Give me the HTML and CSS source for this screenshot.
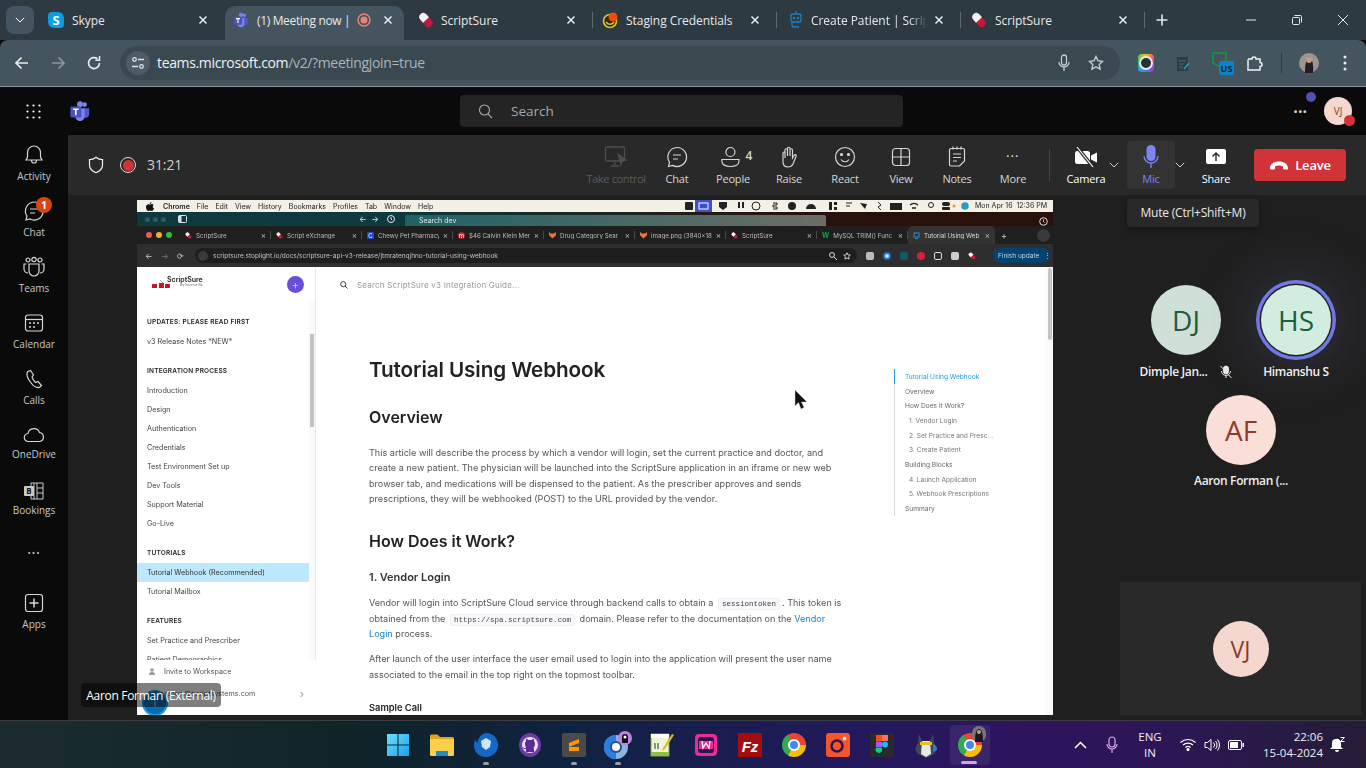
FILE: index.html
```html
<!DOCTYPE html>
<html lang="en">
<head>
<meta charset="utf-8">
<title>Meeting now | Microsoft Teams</title>
<link rel="stylesheet" href="styles.css">
</head>
<body>
<svg class="defs" aria-hidden="true">
  <symbol id="pill" viewBox="0 0 16 16"><g transform="rotate(-42 8 8)"><rect x="4" y="0" width="8" height="16" rx="4" fill="#c2183a"/><path d="M4 8V4a4 4 0 0 1 8 0v4z" fill="#f4f4f4"/></g></symbol>
  <symbol id="x" viewBox="0 0 10 10"><path d="M1.5 1.5l7 7M8.5 1.5l-7 7" stroke="currentColor" stroke-width="1.5" fill="none"/></symbol>
  <symbol id="chev" viewBox="0 0 10 6"><path d="M.8.8L5 5l4.2-4.2" stroke="currentColor" stroke-width="1" fill="none"/></symbol>
  <symbol id="teams" viewBox="0 0 24 24"><circle cx="17" cy="5" r="2.6" fill="#7b83eb"/><circle cx="12" cy="4.5" r="3.2" fill="#7b83eb"/><path d="M16 9h6v7a4 4 0 0 1-6 3z" fill="#5059c9"/><path d="M7 9h10v9a5 5 0 0 1-10 0z" fill="#7b83eb"/><rect x="1.500" y="7" width="12" height="12" rx="1.500" fill="#4b53bc"/><path d="M4.500 10h6M7.500 10v6.500" stroke="#fff" stroke-width="1.700"/></symbol>
</svg>

<div class="app">
  <div class="tabstrip">
    <button class="tabmenu"><svg width="10" height="6"><use href="#chev"/></svg></button>
    <div class="tab">
      <svg class="ti" width="16" height="18" viewBox="0 0 16 18"><path d="M4 1h6a6 6 0 0 1 6 6v6a4 4 0 0 1-4 4H6a6 6 0 0 1-6-6V5a4 4 0 0 1 4-4z" fill="#0a9de4"/><text x="8" y="14" text-anchor="middle" class="skype-s">S</text></svg>
      <span class="tt">Skype</span><svg class="tx" width="10" height="10"><use href="#x"/></svg>
    </div>
    <div class="tab active">
      <svg class="ti" width="16" height="16"><use href="#teams"/></svg>
      <span class="tt">(1) Meeting now |</span>
      <svg class="trec" width="14" height="14" viewBox="0 0 14 14"><circle cx="7" cy="7" r="6" fill="none" stroke="#e9837c" stroke-width="1.500"/><circle cx="7" cy="7" r="3.500" fill="#e9837c"/></svg>
      <svg class="tx" width="10" height="10"><use href="#x"/></svg>
    </div>
    <div class="tab sep">
      <svg class="ti" width="16" height="16"><use href="#pill"/></svg>
      <span class="tt">ScriptSure</span><svg class="tx" width="10" height="10"><use href="#x"/></svg>
    </div>
    <div class="tab sep">
      <svg class="ti" width="17" height="17" viewBox="0 0 17 17"><circle cx="8" cy="9" r="6.500" fill="#2b2a10" stroke="#e3c01f" stroke-width="1.700"/><path d="M4 10c2 3 6 3 8 0" stroke="#e3c01f" stroke-width="1.500" fill="none"/><circle cx="11" cy="5" r="4.500" fill="#ee4d10"/></svg>
      <span class="tt">Staging Credentials</span><svg class="tx" width="10" height="10"><use href="#x"/></svg>
    </div>
    <div class="tab sep">
      <svg class="ti wide" width="14" height="18" viewBox="0 0 14 18" fill="none" stroke="#1d7fc4" stroke-width="1.300"><path d="M7 0v3"/><rect x="2" y="3" width="10" height="8" rx="2"/><path d="M3 11v3a2 2 0 0 0 2 2h5"/><circle cx="5" cy="7" r=".6"/><circle cx="9" cy="7" r=".6"/></svg>
      <span class="tt fade">Create Patient | Script</span><svg class="tx" width="10" height="10"><use href="#x"/></svg>
    </div>
    <div class="tab sep lastsep">
      <svg class="ti" width="16" height="16"><use href="#pill"/></svg>
      <span class="tt">ScriptSure</span><svg class="tx" width="10" height="10"><use href="#x"/></svg>
    </div>
    <svg class="newtab" width="12" height="12" viewBox="0 0 12 12"><path d="M6 .5v11M.5 6h11" stroke="#e6e9eb" stroke-width="1.600"/></svg>
    <div class="winctl">
      <svg width="10" height="10" viewBox="0 0 10 10"><path d="M0 5h10" stroke="#e6e9eb"/></svg>
      <svg width="10" height="10" viewBox="0 0 10 10" fill="none" stroke="#e6e9eb"><rect x=".5" y="2.500" width="7" height="7" rx="1"/><path d="M2.500.5h6a1 1 0 0 1 1 1v6"/></svg>
      <svg width="10" height="10" viewBox="0 0 10 10"><path d="M0 0l10 10M10 0L0 10" stroke="#e6e9eb"/></svg>
    </div>
  </div>

  <div class="toolbar">
    <svg class="nav" width="16" height="16" viewBox="0 0 16 16" fill="none" stroke="#e8ecee" stroke-width="1.700"><path d="M14 8H2M7.500 2.500L2 8l5.500 5.500"/></svg>
    <svg class="nav dim" width="16" height="16" viewBox="0 0 16 16" fill="none" stroke="#8d979d" stroke-width="1.700"><path d="M2 8h12M8.500 2.500L14 8l-5.500 5.500"/></svg>
    <svg class="nav" width="16" height="16" viewBox="0 0 16 16" fill="none" stroke="#e8ecee" stroke-width="1.700"><path d="M13.500 8A5.500 5.500 0 1 1 11.500 3.800"/><path d="M13.500 1v4.200H9.300" stroke-width="1.500"/></svg>
    <div class="omni">
      <span class="tune"><svg width="14" height="14" viewBox="0 0 14 14" fill="none" stroke="#dfe4e7" stroke-width="1.300"><circle cx="3.500" cy="3.500" r="1.800"/><path d="M7 3.500h6M1 10.500h6"/><circle cx="10.500" cy="10.500" r="1.800"/></svg></span>
      <span class="url">teams.microsoft.com<em>/v2/?meetingjoin=true</em></span>
      <svg class="omic" width="12" height="18" viewBox="0 0 12 18" fill="none" stroke="#c4cacd" stroke-width="1.300"><rect x="3.500" y="1" width="5" height="10" rx="2.500"/><path d="M1 8a5 5 0 0 0 10 0M6 13v4"/></svg>
      <svg class="ostar" width="16" height="16" viewBox="0 0 16 16" fill="none" stroke="#c4cacd" stroke-width="1.400"><path d="M8 1.500l2 4.300 4.600.6-3.400 3.200.9 4.600L8 11.900l-4.100 2.300.9-4.600L1.400 6.400 6 5.800z"/></svg>
    </div>
    <div class="exts">
      <span class="ext-ring"></span>
      <svg class="e-clip" width="14" height="18" viewBox="0 0 14 18"><rect x="1" y="3" width="11" height="14" rx="1" fill="#2d3e45"/><path d="M3 7h7M3 10h5M3 13h4" stroke="#4a6a72"/><path d="M8 15l5-6" stroke="#2a9fb0" stroke-width="1.500"/></svg>
      <svg class="ext-us" width="22" height="24" viewBox="0 0 22 24"><path d="M1 2h13v12L8 16 1 12z" fill="none" stroke="#0c9b3a" stroke-width="1.500"/><rect x="7" y="10" width="15" height="14" rx="2" fill="#0a84c6"/><text x="14.500" y="21" text-anchor="middle" class="us-t">US</text></svg>
      <svg class="e-puz" width="16" height="16" viewBox="0 0 16 16" fill="none" stroke="#f0f3f5" stroke-width="1.500"><path d="M1 4h4a2 2 0 0 1 4 0h4v3.500a2 2 0 0 1 0 4V15H1v-3.500"/><path d="M1 11.500v-7"/></svg>
      <i class="ext-sep"></i>
      <svg class="e-prof" width="20" height="20" viewBox="0 0 20 20"><circle cx="10" cy="10" r="10" fill="#9b9490"/><path d="M6 20c0-8 1-15 4-16 3 1 5 8 4 16z" fill="#221d26"/><circle cx="10" cy="7" r="3" fill="#c89b84"/></svg>
      <svg class="e-dots" width="4" height="16" viewBox="0 0 4 16" fill="#e8ecee"><circle cx="2" cy="2" r="1.500"/><circle cx="2" cy="8" r="1.500"/><circle cx="2" cy="14" r="1.500"/></svg>
    </div>
  </div>

  <header class="tmhead">
    <svg class="waffle" width="15" height="15" viewBox="0 0 15 15" fill="#fff"><circle cx="1.500" cy="1.500" r="1.100"/><circle cx="7.500" cy="1.500" r="1.100"/><circle cx="13.500" cy="1.500" r="1.100"/><circle cx="1.500" cy="7.500" r="1.100"/><circle cx="7.500" cy="7.500" r="1.100"/><circle cx="13.500" cy="7.500" r="1.100"/><circle cx="1.500" cy="13.500" r="1.100"/><circle cx="7.500" cy="13.500" r="1.100"/><circle cx="13.500" cy="13.500" r="1.100"/></svg>
    <svg class="tmlogo" width="22" height="22"><use href="#teams"/></svg>
    <div class="tmsearch">
      <svg width="15" height="15" viewBox="0 0 15 15" fill="none" stroke="#b0b0b0" stroke-width="1.100"><circle cx="6.500" cy="6" r="5"/><path d="M10 9.800l4 4.400"/></svg>
      <span>Search</span>
    </div>
    <div class="tmright">
      <span class="tmdots">···</span>
      <span class="bluedot"></span>
      <span class="meav">VJ<i></i></span>
    </div>
  </header>

  <div class="content">
    <nav class="rail">
      <a class="ri"><svg width="22" height="22" viewBox="0 0 22 22" fill="none" stroke="#d6d6d6" stroke-width="1.200"><path d="M11 2a6.500 6.500 0 0 0-6.500 6.500V13L3 16h16l-1.500-3V8.500A6.500 6.500 0 0 0 11 2zM8.500 16.500a2.500 2.500 0 0 0 5 0"/></svg><span>Activity</span></a>
      <a class="ri"><svg width="22" height="22" viewBox="0 0 22 22" fill="none" stroke="#d6d6d6" stroke-width="1.200"><path d="M11 2a9 9 0 1 1-4 17l-4 1 1-4A9 9 0 0 1 11 2z"/><path d="M7 9h8M7 13h5"/></svg><span>Chat</span><b class="badge">1</b></a>
      <a class="ri"><svg width="22" height="22" viewBox="0 0 22 22" fill="none" stroke="#d6d6d6" stroke-width="1.200"><circle cx="5" cy="4" r="2"/><circle cx="11" cy="3.500" r="2.200"/><circle cx="17" cy="4" r="2"/><path d="M6 8h10v7a5 5 0 0 1-10 0z"/><path d="M3.500 8H1v5a4 4 0 0 0 4 4M18.500 8H21v5a4 4 0 0 1-4 4"/></svg><span>Teams</span></a>
      <a class="ri"><svg width="20" height="20" viewBox="0 0 20 20" fill="none" stroke="#d6d6d6" stroke-width="1.200"><rect x="1.500" y="2" width="17" height="16" rx="2.500"/><path d="M1.500 6.500h17"/><g fill="#d6d6d6" stroke="none"><circle cx="6" cy="10" r="1"/><circle cx="10" cy="10" r="1"/><circle cx="14" cy="10" r="1"/><circle cx="6" cy="14" r="1"/><circle cx="10" cy="14" r="1"/></g></svg><span>Calendar</span></a>
      <a class="ri"><svg width="20" height="20" viewBox="0 0 20 20" fill="none" stroke="#d6d6d6" stroke-width="1.200"><path d="M6.500 1.500L4 2.500C2.500 4 3 8 6 12.500s7 6.500 9.500 6l2-2-3.500-4-2.500 1C10 12 8.500 9.500 8 8l1.500-2z"/></svg><span>Calls</span></a>
      <a class="ri up"><svg width="22" height="16" viewBox="0 0 22 16" fill="none" stroke="#d6d6d6" stroke-width="1.200"><path d="M5.500 14.500a4 4 0 0 1-.5-8 6 6 0 0 1 11.500-1 4.600 4.600 0 0 1 .5 9z"/></svg><span>OneDrive</span></a>
      <a class="ri up"><svg width="20" height="18" viewBox="0 0 20 18"><rect x="0" y="4" width="10" height="10" rx="1" fill="#c8c8c8"/><text x="5" y="12" text-anchor="middle" class="b-t">B</text><path d="M7 4V1h12v16H7v-3M10 1v16M13 1v16M13 6h6M13 11h6M7 6h3M7 11h3" stroke="#c8c8c8" fill="none"/></svg><span>Bookings</span></a>
      <a class="ri more"><span class="rdots">•••</span></a>
      <a class="ri"><svg width="20" height="20" viewBox="0 0 20 20" fill="none" stroke="#d6d6d6" stroke-width="1.200"><rect x="1.500" y="1.500" width="17" height="17" rx="2.500"/><path d="M10 5.500v9M5.500 10h9" stroke-width="1.500"/></svg><span>Apps</span></a>
    </nav>

    <main class="meeting">
      <div class="mbar">
        <svg class="shield" width="16" height="18" viewBox="0 0 16 18" fill="none" stroke="#f0f0f0" stroke-width="1.200"><path d="M8 1.200C6 3 3.500 3.600 1.500 3.600V9c0 3.800 3 6.200 6.500 7.700 3.500-1.500 6.500-3.900 6.500-7.700V3.600C12.500 3.600 10 3 8 1.200z"/></svg>
        <span class="rec"><i></i></span>
        <span class="timer">31:21</span>
        <div class="actions">
          <a class="act disabled"><svg width="24" height="22" viewBox="0 0 24 22" fill="none" stroke="#4e4e4e" stroke-width="1.300"><rect x="1.500" y="1" width="19" height="14" rx="1.500"/><path d="M11 15v4M7 20h8"/><path d="M14 8l8 6-4 .5-1 4z" fill="#4e4e4e"/></svg><span>Take control</span></a>
          <a class="act"><svg width="22" height="22" viewBox="0 0 22 22" fill="none" stroke="#d6d6d6" stroke-width="1.200"><path d="M11 1.500a9.500 9.500 0 1 1-4.400 17.900L2.500 20.500l1.100-4.100A9.500 9.500 0 0 1 11 1.500z"/><path d="M7 9h8M7 13h5"/></svg><span>Chat</span></a>
          <a class="act"><svg class="ppl" width="34" height="22" viewBox="0 0 34 22" fill="none" stroke="#d6d6d6" stroke-width="1.200"><circle cx="11" cy="6" r="4.500"/><path d="M2.500 13.500h17v2c0 3-3.500 5-8.500 5s-8.500-2-8.500-5z"/><text x="26" y="14" class="ppl-n">4</text></svg><span>People</span></a>
          <a class="act"><svg width="18" height="22" viewBox="0 0 18 22" fill="none" stroke="#d6d6d6" stroke-width="1.200"><path d="M5 12V4a1.200 1.200 0 0 1 2.500 0v6V2.500a1.200 1.200 0 0 1 2.500 0V10V4a1.200 1.200 0 0 1 2.500 0v8l1.500-2.500c1-1.500 3-.5 2 1L13 18c-1 2-2.500 3-5 3-3.500 0-5-2.500-5-5V7a1 1 0 0 1 2 0z"/></svg><span>Raise</span></a>
          <a class="act"><svg width="22" height="22" viewBox="0 0 22 22" fill="none" stroke="#d6d6d6" stroke-width="1.200"><circle cx="11" cy="11" r="9.500"/><circle cx="7.500" cy="8.500" r="1" fill="#d6d6d6"/><circle cx="14.500" cy="8.500" r="1" fill="#d6d6d6"/><path d="M7 13.500c2 3 6 3 8 0"/></svg><span>React</span></a>
          <a class="act"><svg width="20" height="20" viewBox="0 0 20 20" fill="none" stroke="#d6d6d6" stroke-width="1.200"><rect x="1.500" y="1.500" width="17" height="17" rx="3"/><path d="M10 1.500v17M1.500 10h17"/></svg><span>View</span></a>
          <a class="act"><svg width="18" height="22" viewBox="0 0 18 22" fill="none" stroke="#d6d6d6" stroke-width="1.200"><path d="M3 2.500h12a1.500 1.500 0 0 1 1.500 1.500v11l-5 5H3a1.500 1.500 0 0 1-1.500-1.500V4A1.500 1.500 0 0 1 3 2.500z"/><path d="M5 .5v3M9 .5v3M13 .5v3M5 8h8M5 11.500h8M5 15h4"/></svg><span>Notes</span></a>
          <a class="act"><span class="adots">•••</span><span>More</span></a>
          <i class="asep"></i>
          <a class="act cam"><svg width="26" height="22" viewBox="0 0 26 22"><rect x="2" y="5" width="15" height="13" rx="2.500" fill="#fff"/><path d="M18 9.500l6-3v10l-6-3z" fill="#fff"/><path d="M4 1l16 20" stroke="#292929" stroke-width="3.500"/><path d="M4 1l16 20" stroke="#fff" stroke-width="1.200"/></svg><span>Camera</span></a>
          <svg class="achev" width="10" height="6"><use href="#chev"/></svg>
          <a class="act mic"><svg width="16" height="24" viewBox="0 0 16 24"><rect x="3.500" y="0" width="9" height="16" rx="4.500" fill="#7f85f5"/><path d="M1 11a7 7 0 0 0 14 0M8 18v5" stroke="#7f85f5" stroke-width="1.300" fill="none"/></svg><span>Mic</span></a>
          <svg class="achev mchev" width="10" height="6"><use href="#chev"/></svg>
          <a class="act share"><svg width="20" height="20" viewBox="0 0 20 20"><rect x="0" y="2" width="20" height="15" rx="2" fill="#fff"/><path d="M10 14V6M6.500 9.500L10 6l3.500 3.500" stroke="#292929" stroke-width="1.400" fill="none"/></svg><span>Share</span></a>
          <a class="leave"><svg width="20" height="10" viewBox="0 0 20 10"><path d="M1 8.500C1 4 5 1.500 10 1.500S19 4 19 8.500c0 .8-.5 1-1.500 1h-2c-1 0-1.500-.5-1.500-1.500V6.500C13 5.800 11.500 5.500 10 5.500S7 5.800 6 6.500V8c0 1-.5 1.500-1.500 1.500h-2C1.500 9.500 1 9.300 1 8.500z" fill="#fff"/></svg><span>Leave</span></a>
        </div>
      </div>

      <div class="stage">
        <section class="shared">
          <div class="macbar">
            <svg width="8" height="9" viewBox="0 0 8 9" fill="#111"><path d="M5.500 0c0 1-.8 2-1.800 2C3.600 1 4.500.1 5.500 0zM4 2.500c.6 0 1.100-.4 1.900-.4.700 0 1.400.4 1.800 1-1.400.9-1.200 2.900.3 3.500C7.500 7.800 6.700 9 5.800 9c-.7 0-1-.4-1.800-.4S2.900 9 2.200 9C1 9 0 7 0 5.300 0 3.300 1.200 2.200 2.400 2.200c.7 0 1.200.3 1.600.3z"/></svg>
            <b>Chrome</b><span>File</span><span>Edit</span><span>View</span><span>History</span><span>Bookmarks</span><span>Profiles</span><span>Tab</span><span>Window</span><span>Help</span>
            <svg class="macex" width="300" height="12" viewBox="0 0 300 12" fill="#222"><rect x="3" y="2" width="8" height="8" rx="1"/><rect x="13" y="0" width="17" height="12" fill="#3f51c8"/><rect x="17" y="3" width="9" height="6" fill="none" stroke="#fff"/><path d="M37 2h8v5l-4 3-4-3z"/><path d="M56 2v6h2V2zm4 0v6h2V2z"/><circle cx="74" cy="6" r="4" fill="none" stroke="#222"/><path d="M91 3h4v2h-4v2h4v2h-4" fill="none" stroke="#222"/><circle cx="110" cy="6" r="4"/><path d="M124 9a5 5 0 0 1 10 0z"/><rect x="147" y="2" width="3" height="8"/><rect x="152" y="2" width="3" height="3"/><rect x="152" y="7" width="3" height="3"/><path d="M164 3h6M164 6h4" stroke="#222"/><path d="M178 3l5 6 2-5z"/><path d="M196 2l3 3-3 2 3 3" fill="none" stroke="#222"/><rect x="208" y="3" width="12" height="7"/><path d="M228 5a6 6 0 0 1 8 0M230 8h4" stroke="#222" fill="none" stroke-width="1.300"/><circle cx="249" cy="5" r="2.500" fill="none" stroke="#222"/><rect x="260" y="2" width="8" height="4" rx="2"/><rect x="260" y="7" width="8" height="3" rx="1"/><circle cx="272" cy="6" r="1.500" fill="#f0903a"/><circle cx="283" cy="6" r="3.800" fill="#27a0b8"/></svg>
            <span class="mactime">Mon Apr 16 &nbsp;12:36 PM</span>
          </div>
          <div class="macband">
            <span class="tl"><i></i><i></i><i></i></span>
            <svg class="sb" width="9" height="8" viewBox="0 0 9 8" fill="none" stroke="#d8e2e2"><rect x=".5" y=".5" width="8" height="7" rx="1"/><path d="M1 1h2v6H1z" fill="#d8e2e2"/></svg>
            <span class="bnav">←&nbsp;&nbsp;→</span>
            <svg class="bclock" width="8" height="8" viewBox="0 0 8 8" fill="none" stroke="#dfe8e8"><circle cx="4" cy="4" r="3.500"/><path d="M4 2v2l1 1"/></svg>
            <span class="bsearch">Search dev</span>
            <svg class="bclock2" width="9" height="9" viewBox="0 0 9 9" fill="none" stroke="#ddd"><circle cx="4.500" cy="4.500" r="3.800"/><path d="M4.500 2.500v2l1 1"/></svg>
          </div>
          <div class="cstrip">
            <span class="lights"><i class="r"></i><i class="y"></i><i class="g"></i></span>
            <span class="ct"><svg width="7" height="7"><use href="#pill"/></svg><u>ScriptSure</u><s>×</s></span>
            <span class="ct"><svg width="7" height="7"><use href="#pill"/></svg><u>Script eXchange</u><s>×</s></span>
            <span class="ct"><i class="fav chewy">C</i><u>Chewy Pet Pharmacy</u><s>×</s></span>
            <span class="ct"><i class="fav ck">m</i><u>$46 Calvin Klein Men</u><s>×</s></span>
            <span class="ct"><i class="fav gl"></i><u>Drug Category Sear</u><s>×</s></span>
            <span class="ct"><i class="fav gl"></i><u>image.png (3840x18</u><s>×</s></span>
            <span class="ct"><svg width="7" height="7"><use href="#pill"/></svg><u>ScriptSure</u><s>×</s></span>
            <span class="ct"><b class="wfav">W</b><u>MySQL TRIM() Func</u><s>×</s></span>
            <span class="ct on"><svg width="7" height="7" viewBox="0 0 7 7" fill="none" stroke="#2a8fd0"><rect x="1" y="1" width="5" height="4"/><path d="M2 6.500h3"/></svg><u>Tutorial Using Web</u><s>×</s></span>
            <span class="cplus">+</span>
            <span class="cdrop"></span>
          </div>
          <div class="ctool">
            <span class="cn">←</span><span class="cn dim">→</span><span class="cn">⟳</span>
            <div class="comni"><span class="ctune"></span><span>scriptsure.stoplight.io/docs/scriptsure-api-v3-release/jtmratenqjhno-tutorial-using-webhook</span>
              <svg class="czoom" width="8" height="8" viewBox="0 0 8 8" fill="none" stroke="#ddd"><circle cx="3" cy="3" r="2.400"/><path d="M5 5l3 3"/></svg>
              <svg width="8" height="8" viewBox="0 0 16 16" fill="none" stroke="#ddd" stroke-width="1.800"><path d="M8 1.500l2 4.300 4.600.6-3.400 3.200.9 4.600L8 11.900l-4.100 2.300.9-4.600L1.400 6.400 6 5.800z"/></svg>
            </div>
            <div class="cext"><i class="e1"></i><i class="e2"></i><i class="e3"></i><i class="e4"></i><i class="e5"></i><i class="e6"></i><svg width="8" height="8"><use href="#pill"/></svg></div>
            <span class="finish">Finish update <em>⋮</em></span>
          </div>

          <div class="page">
            <aside class="side">
              <div class="sidehead">
                <span class="logo"><svg width="24" height="9" viewBox="0 0 24 9"><rect x="0" y="4" width="5" height="4" fill="#c2162a"/><rect x="7" y="3" width="5" height="5" fill="#c2162a"/><rect x="13" y="4" width="5" height="4" fill="#c2162a"/><path d="M8 0l3 3" stroke="#999"/></svg><span class="lg"><b>ScriptSure</b><small>by Sunrise Rx</small></span></span>
                <span class="plus">+</span>
              </div>
              <div class="sidescroll">
                <div class="navlist">
                  <h5>UPDATES: PLEASE READ FIRST</h5>
                  <a>v3 Release Notes *NEW*</a>
                  <h5 class="gap">INTEGRATION PROCESS</h5>
                  <a>Introduction</a><a>Design</a><a>Authentication</a><a>Credentials</a><a>Test Environment Set up</a><a>Dev Tools</a><a>Support Material</a><a>Go-Live</a>
                  <h5 class="gap">TUTORIALS</h5>
                  <a class="cur">Tutorial Webhook (Recommended)</a><a>Tutorial Mailbox</a>
                  <h5 class="gap">FEATURES</h5>
                  <a>Set Practice and Prescriber</a><a>Patient Demographics</a>
                </div>
                <div class="sbar"><i></i></div>
              </div>
              <div class="sidefoot">
                <div class="inv"><svg width="9" height="7" viewBox="0 0 9 7" fill="#999"><circle cx="3" cy="2" r="1.800"/><path d="M0 7a3 3 0 0 1 6 0zM7 1v2M6 2h2"/></svg><span>Invite to Workspace</span></div>
                <div class="acct"><span>support@scriptsystems.com</span><em>›</em></div>
                <span class="roundav"><i>T</i></span>
              </div>
            </aside>
            <div class="doc">
              <div class="docsearch"><svg width="8" height="8" viewBox="0 0 8 8" fill="none" stroke="#444"><circle cx="3.200" cy="3.200" r="2.600"/><path d="M5 5l2.500 2.500"/></svg><span>Search ScriptSure v3 Integration Guide...</span></div>
              <div class="docbody">
                <article class="art">
                  <h1>Tutorial Using Webhook</h1>
                  <h2 class="ov">Overview</h2>
                  <p class="p1">This article will describe the process by which a vendor will login, set the current practice and doctor, and<br>create a new patient. The physician will be launched into the ScriptSure application in an iframe or new web<br>browser tab, and medications will be dispensed to the patient. As the prescriber approves and sends<br>prescriptions, they will be webhooked (POST) to the URL provided by the vendor.</p>
                  <h2 class="how">How Does it Work?</h2>
                  <h3>1. Vendor Login</h3>
                  <p class="p2">Vendor will login into ScriptSure Cloud service through backend calls to obtain a <code>sessiontoken</code>. This token is<br>obtained from the <code>https://spa.scriptsure.com</code> domain. Please refer to the documentation on the <a>Vendor<br>Login</a> process.</p>
                  <p class="p3">After launch of the user interface the user email used to login into the application will present the user name<br>associated to the email in the top right on the topmost toolbar.</p>
                  <h4>Sample Call</h4>
                </article>
                <ul class="toc">
                  <li class="now">Tutorial Using Webhook</li><li>Overview</li><li>How Does it Work?</li><li class="in">1. Vendor Login</li><li class="in">2. Set Practice and Presc...</li><li class="in">3. Create Patient</li><li>Building Blocks</li><li class="in">4. Launch Application</li><li class="in">5. Webhook Prescriptions</li><li>Summary</li>
                </ul>
              </div>
              <div class="pagebar"><i></i></div>
            </div>
          </div>
          <svg class="cursor" width="14" height="20" viewBox="0 0 14 20"><path d="M1 0v16l3.500-3.500L7 19l3-1.500-2.500-5.500H13z" fill="#111" stroke="#ccc" stroke-width=".5"/></svg>
        </section>

        <aside class="people">
          <div class="tiles">
            <div class="tile"><span class="av dj">DJ</span><span class="nm">Dimple Jan...<svg class="muted" width="12" height="14" viewBox="0 0 12 14" fill="none" stroke="#e8e8e8"><rect x="3.500" y="1" width="5" height="8" rx="2.500" fill="#e8e8e8"/><path d="M1.500 6a4.500 4.500 0 0 0 9 0M6 11v2M.5 1l11 12"/></svg></span></div>
            <div class="tile"><span class="av hs">HS</span><span class="nm">Himanshu S</span></div>
            <div class="tile full"><span class="av af">AF</span><span class="nm">Aaron Forman (...</span></div>
          </div>
          <div class="selftile"><span class="av vj">VJ</span></div>
        </aside>

        <div class="namelabel">Aaron Forman (External)</div>
        <div class="tooltip">Mute (Ctrl+Shift+M)</div>
      </div>
    </main>
  </div>

  <footer class="taskbar">
    <div class="tbicons">
      <span class="tbi"><svg width="24" height="24" viewBox="0 0 24 24"><defs><linearGradient id="w" x1="0" y1="0" x2="1" y2="1"><stop offset="0" stop-color="#6fe0fb"/><stop offset="1" stop-color="#1aa0ee"/></linearGradient></defs><path d="M1 1h10.500v10.500H1zM12.500 1H23v10.500H12.500zM1 12.500h10.500V23H1zM12.500 12.500H23V23H12.500z" fill="url(#w)"/></svg></span>
      <span class="tbi"><svg width="24" height="22" viewBox="0 0 24 22"><path d="M0 2a1.500 1.500 0 0 1 1.500-1.500h6L10 3h12.500A1.500 1.500 0 0 1 24 4.500V8H0z" fill="#e0a51f"/><path d="M0 5h24v15.500a1.500 1.500 0 0 1-1.500 1.500h-21A1.500 1.500 0 0 1 0 20.500z" fill="#fbcf4a"/><path d="M6 17h12v5H6z" fill="#1d8ad2"/></svg></span>
      <span class="tbi dot"><svg width="24" height="26" viewBox="0 0 24 26"><path d="M12 1c7 0 12 5 12 12s-5 12-12 12S0 20 0 13c0-2 .5-4 1.500-6 0 2 1 3 2 4C4 6 7 2 12 1z" fill="#1668c8"/><path d="M7 9l5-3 5 3-1 6-4 3-4-3z" fill="#cfe5f8"/></svg></span>
      <span class="tbi"><svg width="24" height="24" viewBox="0 0 24 24"><ellipse cx="12" cy="12" rx="11" ry="12" fill="#6f3aa8"/><circle cx="12" cy="12" r="8" fill="#e8dff2"/><path d="M8 19v-3c-2 .5-3-1-3.500-2 1 .5 2 1.500 3.500 1 0-1-1-2-1-4 0-1 .2-2 1-2.500V6c1 0 2 .5 2.500 1h3c.5-.5 1.500-1 2.500-1v2.500c.8.5 1 1.500 1 2.500 0 2-1 3-1.500 4 .5.500.5 1 .5 2v2z" fill="#5a2b92"/></svg></span>
      <span class="tbi dot"><svg width="24" height="24" viewBox="0 0 24 24"><rect width="24" height="24" rx="2" fill="#4a4a4a"/><path d="M7 10l10-4v4L7 14zM7 14l10 0v4L7 18z" fill="#ff9800"/></svg></span>
      <span class="tbi dot"><svg width="28" height="28" viewBox="0 0 28 28"><circle cx="12" cy="16" r="12" fill="#8ab4e8"/><path d="M12 4a12 12 0 0 0 0 24z" fill="#2d7de0"/><circle cx="12" cy="16" r="6" fill="#25528f"/><circle cx="12" cy="16" r="4" fill="#fff"/><circle cx="21" cy="7" r="7" fill="#c082e0"/><path d="M18 12V6a3 3 0 0 1 6 0v6z" fill="#111"/><circle cx="21" cy="6" r="1.500" fill="#fff"/></svg></span>
      <span class="tbi"><svg width="26" height="26" viewBox="0 0 26 26"><path d="M2 2h18v22H2z" fill="#ecf5d6" stroke="#7ca13c"/><path d="M2 2h18v4H2z" fill="#fff"/><path d="M6 11v6M9 11v6" stroke="#333"/><path d="M2 20h18v4H2z" fill="#8fc045"/><path d="M14 16l9-14 2 1-9 14-3 2z" fill="#e3b72a"/></svg></span>
      <span class="tbi"><svg width="24" height="24" viewBox="0 0 24 24"><path d="M5 1h14a4 4 0 0 1 4 4v14a4 4 0 0 1-4 4H5a4 4 0 0 1-4-4V5a4 4 0 0 1 4-4z" fill="#ee2a94"/><rect x="4" y="4" width="16" height="16" rx="3" fill="#2a1550"/><rect x="5" y="8" width="14" height="8" fill="#ee2a94"/><path d="M8 8l1 7 3-5 3 5 1-7" stroke="#fff" fill="none" stroke-width="1.300"/></svg></span>
      <span class="tbi"><svg width="24" height="24" viewBox="0 0 24 24"><rect width="24" height="24" fill="#a30d0d"/><text x="12" y="19" text-anchor="middle" class="fz">Fz</text></svg></span>
      <span class="tbi"><span class="chrome"></span></span>
      <span class="tbi"><svg width="24" height="24" viewBox="0 0 24 24"><rect width="24" height="24" rx="3" fill="#f2562a"/><circle cx="11" cy="13" r="5.500" fill="none" stroke="#2a1550" stroke-width="2.500"/><circle cx="18.500" cy="5.500" r="2" fill="#f9d6c6"/></svg></span>
      <span class="tbi"><svg width="24" height="24" viewBox="0 0 24 24"><rect width="24" height="24" rx="2" fill="#2a2a2a"/><rect x="6" y="2" width="6" height="6" fill="#f24e1e"/><rect x="12" y="2" width="6" height="6" fill="#ff7262"/><rect x="6" y="8.500" width="6" height="6" fill="#a259ff"/><circle cx="15" cy="11.500" r="3" fill="#1abcfe"/><path d="M6 15h6v3a3 3 0 1 1-6-3z" fill="#0acf83"/></svg></span>
      <span class="tbi"><svg width="24" height="26" viewBox="0 0 24 26"><path d="M5 2l3 7h8l3-7 1 9 3 6-3 5-8 4-8-4-3-5 3-6z" fill="#3a4a5a"/><path d="M8 9h8l1 13-5 3-5-3z" fill="#e8e8e8"/><path d="M6 10h12v3H6z" fill="#e8c020"/><path d="M19 12a6 6 0 0 1 4 6l-4 2z" fill="#2a80d0"/></svg></span>
      <span class="tbi current"><span class="chrome"></span><svg class="prof" width="14" height="16" viewBox="0 0 14 16"><rect width="14" height="16" rx="7" fill="#777"/><path d="M3 16c0-8 1-13 4-13s4 5 4 13z" fill="#1c1820"/><circle cx="7" cy="6" r="2" fill="#c89b84"/></svg></span>
    </div>
    <div class="tray">
      <svg class="tchev" width="13" height="8" viewBox="0 0 13 8"><path d="M1 7l5.500-5.500L12 7" stroke="#fff" stroke-width="1.500" fill="none"/></svg>
      <svg class="tmic" width="12" height="18" viewBox="0 0 12 18" fill="none" stroke="#d8a8ec" stroke-width="1.200"><rect x="3" y="1" width="6" height="10" rx="3"/><path d="M1 8a5 5 0 0 0 10 0M6 13v4"/></svg>
      <span class="lang">ENG<br>IN</span>
      <svg class="twifi" width="16" height="13" viewBox="0 0 16 13" fill="none" stroke="#fff" stroke-width="1.100"><path d="M.5 4.500a11 11 0 0 1 15 0M3 7a7.500 7.500 0 0 1 10 0M5.500 9.500a3.800 3.800 0 0 1 5 0"/><circle cx="8" cy="11.500" r="1" fill="#fff"/></svg>
      <svg class="tspk" width="16" height="14" viewBox="0 0 16 14" fill="none" stroke="#fff"><path d="M1 4.500h2.500L7 1.500v11l-3.500-3H1zM9.500 4.500a3.500 3.500 0 0 1 0 5M11.500 3a6 6 0 0 1 0 8M13.500 1.500a8.500 8.500 0 0 1 0 11"/></svg>
      <svg class="tbat" width="16" height="10" viewBox="0 0 16 10"><rect x=".5" y=".5" width="13" height="9" rx="1.500" fill="none" stroke="#fff"/><rect x="2" y="2" width="8" height="6" fill="#fff"/><rect x="14.500" y="3" width="1.500" height="4" fill="#fff"/></svg>
      <span class="clock">22:06<br>15-04-2024</span>
      <svg class="tbell" width="15" height="16" viewBox="0 0 15 16"><path d="M6 2a4 4 0 0 0-4 4v4l-2 2h13l-2-2V6a4 4 0 0 0-5-4zM5 13a2 2 0 0 0 4 0z" fill="#fff"/><path d="M10.500.5h4l-4 4h4" stroke="#fff" fill="none"/></svg>
    </div>
  </footer>
</div>
</body>
</html>
```

FILE: styles.css
```css
* { box-sizing: border-box; }
html, body { margin: 0; height: 100%; overflow: hidden; }
body { font-family: "Open Sans", "Noto Sans", "Liberation Sans", sans-serif; color: #fff; background: #0a0a0a; }
.defs { position: absolute; width: 0; height: 0; }
a { color: inherit; text-decoration: none; }
svg { flex: none; display: block; }
.app { width: 1366px; height: 768px; display: flex; flex-direction: column; }

/* browser tab strip */
.tabstrip { height: 40px; flex: none; background: #2e3a42; display: flex; align-items: flex-end; padding-left: 6px; }
.tabmenu { width: 28px; height: 28px; margin: 0 7px 6px 0; border: 0; padding: 0; border-radius: 8px; background: #45555f; color: #fff; display: flex; align-items: center; justify-content: center; }
.tabmenu svg { stroke-width: 2; }
.tab { width: 184px; height: 34px; padding: 0 17px 6px 7px; display: flex; align-items: center; gap: 8px; color: #e5e9eb; font-size: 12px; letter-spacing: -.05px; position: relative; }
.tab.active { background: #45555f; border-radius: 10px 10px 0 0; padding-left: 8px; padding-right: 11px; width: 179px; margin-right: 5px; letter-spacing: -.35px; }
.tab.sep { padding-left: 9px; gap: 7px; }
.tab.sep::after { content: ""; position: absolute; right: 0; top: 6px; height: 16px; width: 1px; background: #5c6a72; }
.tab.lastsep { padding-left: 10px; gap: 8px; }
.ti.wide { margin-left: 3px; margin-right: 1px; }
.tt { flex: 1; min-width: 0; white-space: nowrap; overflow: hidden; }
.tt.fade { -webkit-mask-image: linear-gradient(90deg, #000 85%, transparent); mask-image: linear-gradient(90deg, #000 85%, transparent); }
.tx { color: #e8ecee; }
.trec { margin-right: 4px; }
.skype-s { font: 700 13px "Open Sans", sans-serif; fill: #fff; }
.newtab { margin: 0 0 14px 11px; }
.winctl { margin-left: auto; height: 40px; align-self: flex-start; display: flex; align-items: center; gap: 36px; padding-right: 18px; }

/* browser toolbar */
.toolbar { height: 47px; flex: none; background: #45555f; border-bottom: 1px solid #8a979e; border-radius: 8px 8px 0 0; display: flex; align-items: center; padding: 0 20px 1px 14px; }
.toolbar .nav { margin-right: 20px; }
.toolbar .nav:nth-child(3) { margin-right: 18px; }
.omni { width: 1000px; height: 34px; flex: none; background: #3a4850; border-radius: 17px; display: flex; align-items: center; padding: 0 16px 0 6px; }
.tune { width: 24px; height: 24px; border-radius: 50%; background: #4d5c65; display: flex; align-items: center; justify-content: center; margin-right: 7px; }
.url { flex: 1; font-size: 14px; color: #f0f3f4; white-space: nowrap; letter-spacing: -.35px; }
.url em { font-style: normal; color: #aab4b9; }
.omic { margin-right: 18px; }
.exts { display: flex; align-items: center; margin-left: 18px; flex: 1; }
.e-clip { margin-left: 22px; }
.ext-us { margin-left: 22px; }
.e-puz { margin-left: 13px; }
.ext-sep { width: 1px; height: 20px; background: #2f3a42; margin-left: 18px; flex: none; }
.e-prof { margin-left: 17px; }
.e-dots { margin-left: 24px; }
.ext-ring { width: 16px; height: 18px; border-radius: 4px; flex: none; background: conic-gradient(#f7c02a, #ee3c7c, #7c4de0, #2aa0e8, #2ecb6a, #f7c02a); position: relative; display: flex; align-items: center; justify-content: center; }
.ext-ring::after { content: ""; width: 10px; height: 10px; border-radius: 50%; background: #263238; border: 2px solid #e8e8e8; }
.us-t { font: 700 9px "Open Sans", sans-serif; fill: #10233a; }

/* teams header */
.tmhead { height: 48px; flex: none; background: #0a0a0a; display: flex; align-items: center; padding-left: 26px; position: relative; }
.tmlogo { margin-left: 28px; }
.tmsearch { width: 443px; height: 32px; margin-left: 369px; background: #242424; border-radius: 4px; display: flex; align-items: center; gap: 18px; padding-left: 18px; font-size: 13.5px; color: #a8a8a8; }
.tmright { margin-left: auto; display: flex; align-items: center; padding-right: 14px; }
.tmdots { font-size: 16px; font-weight: 700; margin-right: 17px; letter-spacing: 0; color: #ccc; }
.bluedot { position: absolute; right: 50px; top: 5px; width: 10px; height: 10px; border-radius: 50%; background: #4f52b2; }
.meav { width: 28px; height: 28px; border-radius: 50%; background: #f4d8d0; color: #8a3b2a; font-size: 10px; display: flex; align-items: center; justify-content: center; position: relative; }
.meav i { position: absolute; right: -3px; bottom: -1px; width: 11px; height: 11px; border-radius: 50%; background: #d13438; }

.content { flex: 1; min-height: 0; display: flex; }
.rail { width: 68px; flex: none; background: #0a0a0a; display: flex; flex-direction: column; padding-top: 6px; }
.ri { height: 56px; display: flex; flex-direction: column; align-items: center; position: relative; color: #c8c8c8; font-size: 10px; }
.ri svg { position: absolute; top: 14px; transform: translateY(-50%); }
.ri span { position: absolute; top: 28px; line-height: 14px; }
.ri.up span { top: 26px; }
.ri .rdots { top: 13px; font-size: 9px; letter-spacing: 1px; color: #bbb; }
.badge { position: absolute; left: 36px; top: 0; width: 16px; height: 16px; border-radius: 50%; background: #d8460f; color: #fff; font-size: 10px; font-weight: 700; display: flex; align-items: center; justify-content: center; }
.b-t { font: 700 8px "Open Sans", sans-serif; fill: #111; }

.meeting { flex: 1; min-width: 0; display: flex; flex-direction: column; background: #1f1f1f; }
.mbar { height: 60px; flex: none; background: #292929; display: flex; align-items: center; padding-left: 20px; }
.rec { width: 16px; height: 16px; margin-left: 16px; border-radius: 50%; border: 1px solid #ddd; background: #292929; display: flex; align-items: center; justify-content: center; }
.rec i { width: 11px; height: 11px; border-radius: 50%; background: #d13438; }
.timer { margin: -1px 0 0 11px; font-size: 14px; color: #d0d0d0; letter-spacing: -.1px; }
.actions { margin-left: auto; display: flex; align-items: center; padding-right: 20px; }
.act { width: 56px; height: 48px; display: flex; flex-direction: column; align-items: center; justify-content: flex-end; font-size: 11px; color: #d6d6d6; padding-bottom: 3px; position: relative; letter-spacing: -.2px; white-space: nowrap; }
.act svg { position: absolute; top: 16px; left: 50%; transform: translate(-50%, -50%); }
.act .ppl { transform: translate(-40%, -50%); }
.ppl-n { font: 600 12px "Open Sans", sans-serif; fill: #d6d6d6; stroke: none; }
.act.disabled { color: #5a5a5a; margin: 0 5px 0 -5px; letter-spacing: -.35px; }
.adots { position: absolute; top: 9px; font-size: 8px; letter-spacing: 1.5px; }
.asep { width: 1px; height: 32px; background: #454545; margin: 0 8px; }
.act.cam { color: #fff; }
.achev { color: #d0d0d0; margin-left: -5px; }
.act.mic { width: 48px; margin-left: 8px; background: #333; border-radius: 4px; color: #7f85f5; }
.mchev { margin: 0 7px 0 0; }
.act.share { width: 48px; color: #fff; }
.leave { margin-left: 14px; width: 92px; height: 32px; background: #d13438; border-radius: 4px; display: flex; align-items: center; justify-content: center; gap: 6px; font-size: 13px; font-weight: 600; letter-spacing: -.2px; }

.stage { flex: 1; min-height: 0; display: flex; position: relative; }

/* shared screen */
.shared { width: 916px; height: 515px; margin: 5px 0 0 69px; flex: none; background: #fff; display: flex; flex-direction: column; overflow: hidden; position: relative; font-family: Inter, "Liberation Sans", sans-serif; color: #222; filter: blur(.3px); }
.macbar { height: 12px; flex: none; background: #f3f0e6; display: flex; align-items: center; padding-left: 9px; font-size: 7px; gap: 7px; white-space: nowrap; position: relative; color: #222; }
.macbar b { font-weight: 600; margin-left: 2px; }
.macex { position: absolute; left: 545px; top: 0; }
.mactime { position: absolute; right: 6px; top: 1px; line-height: 10px; }
.macband { height: 14px; flex: none; background: linear-gradient(90deg, #0c3a3e 0, #0c3a3e 28%, #2a100a 74%); display: flex; align-items: center; position: relative; padding-left: 8px; color: #dfe8e8; font-size: 7px; }
.tl { display: flex; gap: 3px; }
.tl i { width: 5px; height: 5px; border-radius: 50%; background: #2d5a5e; }
.sb { margin-left: 12px; }
.bnav { margin-left: 172px; font-size: 8px; }
.bclock { margin-left: 8px; }
.bsearch { position: absolute; left: 268px; width: 421px; top: 3px; height: 11px; background: linear-gradient(90deg, #1e6266, #6d6e64); border-radius: 2px 2px 0 0; padding-left: 14px; line-height: 11px; }
.bclock2 { position: absolute; right: 5px; top: 5px; }
.cstrip { height: 18px; flex: none; background: #1f1f1f; display: flex; align-items: center; padding-left: 9px; color: #bbb; font-size: 6.2px; position: relative; }
.lights { width: 34px; display: flex; gap: 4px; }
.lights i { width: 6px; height: 6px; border-radius: 50%; }
.lights .r { background: #ee5a52; } .lights .y { background: #f1b02e; } .lights .g { background: #29c03f; }
.ct { width: 91px; height: 18px; flex: none; display: flex; align-items: center; gap: 4px; padding: 0 5px; position: relative; white-space: nowrap; }
.ct::after { content: ""; position: absolute; right: 0; top: 5px; height: 8px; width: 1px; background: #4a4a4a; }
.ct u { text-decoration: none; flex: 1; min-width: 0; overflow: hidden; }
.ct s { text-decoration: none; font-size: 8px; color: #bbb; flex: none; }
.ct.on { background: #333; border-radius: 5px 5px 0 0; width: 87px; color: #ddd; }
.ct.on::after { display: none; }
.fav { width: 7px; height: 7px; border-radius: 1px; flex: none; font-size: 6px; font-style: normal; line-height: 7px; text-align: center; color: #fff; }
.chewy { background: #1c49c2; } .ck { background: #c4202e; border-radius: 50%; } .gl { background: #e8743b; clip-path: polygon(0 0, 25% 30%, 75% 30%, 100% 0, 100% 55%, 50% 100%, 0 55%); }
.wfav { color: #1a9e4a; font-size: 7px; flex: none; }
.cplus { margin-left: 6px; font-size: 9px; color: #ccc; }
.cdrop { position: absolute; right: 3px; top: 3px; width: 13px; height: 13px; border-radius: 50%; background: #3a3a3a; }
.ctool { height: 23px; flex: none; background: #2e2e2e; display: flex; align-items: center; padding: 0 3px 0 8px; color: #aaa; font-size: 7px; }
.cn { width: 16px; font-size: 8px; color: #ccc; }
.cn.dim { color: #777; }
.comni { width: 662px; height: 15px; margin-left: 2px; border-radius: 8px; background: #1e1e1e; display: flex; align-items: center; gap: 6px; padding: 0 6px 0 3px; color: #c2c2c2; white-space: nowrap; font-size: 6.5px; }
.ctune { width: 10px; height: 10px; border-radius: 50%; background: #3a3a3a; margin-right: -1px; }
.czoom { margin-left: auto; }
.cext { display: flex; align-items: center; gap: 9px; margin-left: 9px; flex: 1; }
.cext i { width: 8px; height: 8px; border-radius: 2px; flex: none; }
.e1 { background: #bbb; } .e2 { background: #d8e6f8; border-radius: 50% !important; border: 2px solid #1d6fd0; } .e3 { background: #0e5a6a; } .e4 { background: #d8203a; border-radius: 50% !important; } .e5 { border: 1px solid #ddd; } .e6 { background: #ccc; }
.finish { width: 57px; height: 15px; flex: none; border-radius: 8px; background: #06426e; color: #b8d8f0; font-size: 6.5px; display: flex; align-items: center; padding-left: 5px; gap: 5px; white-space: nowrap; }
.finish em { font-style: normal; }

.page { flex: 1; min-height: 0; display: flex; background: #fff; }
.side { width: 179px; flex: none; display: flex; flex-direction: column; border-right: 1px solid #e8e8e8; position: relative; }
.sidehead { height: 35px; flex: none; display: flex; align-items: center; padding: 0 12px 0 15px; justify-content: space-between; }
.logo { display: flex; align-items: center; }
.lg { display: flex; flex-direction: column; line-height: 6px; margin-left: -9px; margin-top: -5px; }
.lg b { font-size: 7px; font-weight: 600; }
.lg small { font-size: 3.500px; align-self: flex-end; line-height: 4px; color: #666; }
.plus { width: 17px; height: 17px; border-radius: 50%; background: #6b4ed8; color: #cfc4f5; font-size: 11px; display: flex; align-items: center; justify-content: center; margin-right: -1px; }
.sidescroll { flex: 1; min-height: 0; display: flex; overflow: hidden; }
.navlist { width: 172px; flex: none; padding-top: 10px; overflow: hidden; }
.navlist h5 { margin: 0; height: 20px; line-height: 21px; padding-left: 10px; font-size: 6.5px; font-weight: 600; color: #222; letter-spacing: .2px; white-space: nowrap; }
.navlist h5.gap { margin-top: 10px; }
.navlist a { display: block; height: 19px; line-height: 19px; padding-left: 10px; font-size: 7.2px; color: #444; white-space: nowrap; }
.navlist a.cur { background: #bde8fd; color: #333; }
.sbar { width: 7px; padding: 0 1px; background: #fafafa; position: relative; }
.sbar i { display: block; width: 4px; height: 93px; margin-top: 32px; background: #c4c4c4; }
.sidefoot { height: 55px; flex: none; background: #fff; margin-right: -1px; padding: 1px 0 0 10px; position: relative; font-size: 7.2px; color: #555; }
.inv { display: flex; align-items: center; gap: 6px; height: 20px; padding-left: 2px; }
.acct { display: flex; justify-content: space-between; height: 24px; align-items: center; padding: 1px 12px 0 11px; }
.acct em { font-style: normal; font-size: 11px; color: #999; }
.roundav { position: absolute; left: 5px; top: 30px; width: 26px; height: 26px; border-radius: 50%; border: 2px solid #1a9ae0; background: #0a6ab0; display: flex; align-items: center; justify-content: center; color: #cde; font-size: 10px; }
.roundav i { font-style: normal; }

.doc { flex: 1; min-width: 0; display: flex; flex-direction: column; position: relative; }
.docsearch { height: 35px; flex: none; display: flex; align-items: center; gap: 9px; padding-left: 24px; font-size: 8px; color: #999; letter-spacing: .2px; }
.docbody { flex: 1; min-height: 0; display: flex; overflow: hidden; }
.art { width: 525px; flex: none; margin-left: 53px; padding-top: 55px; }
.art h1 { margin: 0; font-size: 20.7px; line-height: 26px; font-weight: 600; color: #222; white-space: nowrap; letter-spacing: -.1px; }
.art h2 { margin: 0; font-size: 16px; line-height: 22px; font-weight: 600; color: #222; white-space: nowrap; }
.art .ov { margin-top: 23px; }
.art p { margin: 0; font-size: 9.1px; line-height: 15.35px; color: #555; white-space: nowrap; }
.art .p1 { margin-top: 17px; }
.art .how { margin-top: 24px; }
.art h3 { margin: 18px 0 0; font-size: 11px; line-height: 14px; font-weight: 600; color: #333; }
.art .p2 { margin-top: 11px; }
.art .p3 { margin-top: 10px; }
.art code { font: 7.5px "Liberation Mono", monospace; padding: 1px 3px; margin: 0 2px; background: #f6f8fa; border: 1px solid #eef0f3; border-radius: 2px; color: #444; }
.art p a { color: #1a7fc4; }
.art h4 { margin: 19px 0 0; font-size: 9.3px; line-height: 14px; font-weight: 600; color: #222; }
.toc { list-style: none; margin: 67px 0 0 0; padding: 1px 0 0 0; width: 110px; height: 147px; flex: none; border-left: 1px solid #dcdcdc; position: relative; font-size: 6.6px; color: #666; white-space: nowrap; }
.toc li { height: 14.66px; line-height: 14.66px; padding-left: 10px; }
.toc li.in { padding-left: 14px; color: #777; }
.toc li.now { color: #1e9de0; }
.toc::before { content: ""; position: absolute; left: -1px; top: 0; width: 1px; height: 15px; background: #1e9de0; }
.pagebar { position: absolute; right: 0; top: 0; bottom: 0; width: 7px; background: #fafafa; }
.pagebar i { display: block; width: 4px; height: 72px; margin: 1px 0 0 2px; background: #c4c4c4; border-radius: 2px; }
.cursor { position: absolute; left: 657px; top: 190px; }

/* participants */
.people { flex: 1; min-width: 0; display: flex; flex-direction: column; padding-top: 90px; }
.tiles { width: 220px; margin-left: 78px; display: flex; flex-wrap: wrap; }
.tile { width: 110px; height: 110px; display: flex; flex-direction: column; align-items: center; font-size: 12px; font-weight: 600; white-space: nowrap; color: #f0f0f0; letter-spacing: -.35px; }
.tile.full { width: 220px; }
.nm { margin-top: 7px; line-height: 18px; display: flex; align-items: center; }
.tile:not(.full) .nm { margin-top: 8px; }
.muted { margin-left: 13px; }
.av { width: 70px; height: 70px; border-radius: 50%; flex: none; display: flex; align-items: center; justify-content: center; font-size: 28px; font-weight: 500; letter-spacing: 0; }
.dj { background: #cfe0d8; color: #1f5a3d; }
.hs { background: #d2ecdf; color: #1b6040; box-shadow: 0 0 0 1.500px #222, 0 0 0 5px #6f78e6, 0 0 50px 20px rgba(110,110,170,.16); }
.af { background: #fadfd9; color: #8f3b2c; }
.selftile { width: 241px; height: 133px; margin: auto 0 5px 67px; background: #292929; display: flex; align-items: center; justify-content: center; }
.av.vj { width: 56px; height: 56px; background: #f4d8d0; color: #8a3b2a; font-size: 23px; }

.namelabel { position: absolute; left: 13px; top: 488px; width: 140px; height: 24px; border-radius: 4px; background: rgba(0,0,0,.5); color: #fff; font-size: 12px; line-height: 26px; text-align: center; white-space: nowrap; letter-spacing: -.3px; }
.tooltip { position: absolute; left: 1059px; top: 4px; width: 132px; height: 28px; background: #292929; border-radius: 4px; font-size: 12px; letter-spacing: -.2px; line-height: 28px; text-align: center; color: #e8e8e8; box-shadow: 0 2px 6px rgba(0,0,0,.3); white-space: nowrap; }
.tooltip::before { content: ""; position: absolute; left: 19px; top: -5px; width: 10px; height: 10px; background: #292929; transform: rotate(45deg); z-index: -1; }

/* windows taskbar */
.taskbar { height: 48px; flex: none; border-top: 1px solid #3a3d42; background: linear-gradient(90deg, #1c2c2e 0, #102428 26%, #0f2240 41%, #22195c 62%, #2d1460 73%, #2c1656 85%, #261c36 100%); display: flex; align-items: center; position: relative; }
.tbicons { margin-left: 376px; display: flex; height: 47px; align-items: center; }
.tbi { width: 44px; height: 40px; display: flex; align-items: center; justify-content: center; position: relative; }
.tbi.dot::after { content: ""; position: absolute; bottom: 0; left: 19px; width: 6px; height: 3px; border-radius: 2px; background: #9a9fa8; }
.tbi.current { width: 40px; margin-left: 2px; background: rgba(255,255,255,.07); border-radius: 4px; }
.tbi.current::after { content: ""; position: absolute; bottom: 1px; left: 11px; width: 16px; height: 3px; border-radius: 2px; background: #d8a0ec; }
.chrome { width: 24px; height: 24px; border-radius: 50%; background: conic-gradient(from 330deg, #ea4335 0 120deg, #fbbc05 120deg 240deg, #34a853 240deg 360deg); display: flex; align-items: center; justify-content: center; }
.chrome::after { content: ""; width: 12px; height: 12px; border-radius: 50%; background: #4285f4; border: 2px solid #fff; box-sizing: border-box; }
.prof { position: absolute; right: 4px; top: 1px; }
.fz { font: italic 700 15px "Liberation Sans", sans-serif; fill: #fff; }
.tray { position: absolute; right: 0; top: 0; height: 47px; left: 1074px; display: flex; align-items: center; font-size: 12px; color: #f0f0f0; }
.tmic { margin-left: 19px; }
.lang { width: 40px; margin-left: 12px; text-align: center; line-height: 16px; font-size: 11.5px; }
.twifi { margin-left: 10px; }
.tspk { margin-left: 8px; }
.tbat { margin-left: 8px; }
.clock { width: 76px; margin-left: 3px; text-align: right; line-height: 16px; font-size: 11.5px; }
.tbell { margin-left: 7px; }
```
